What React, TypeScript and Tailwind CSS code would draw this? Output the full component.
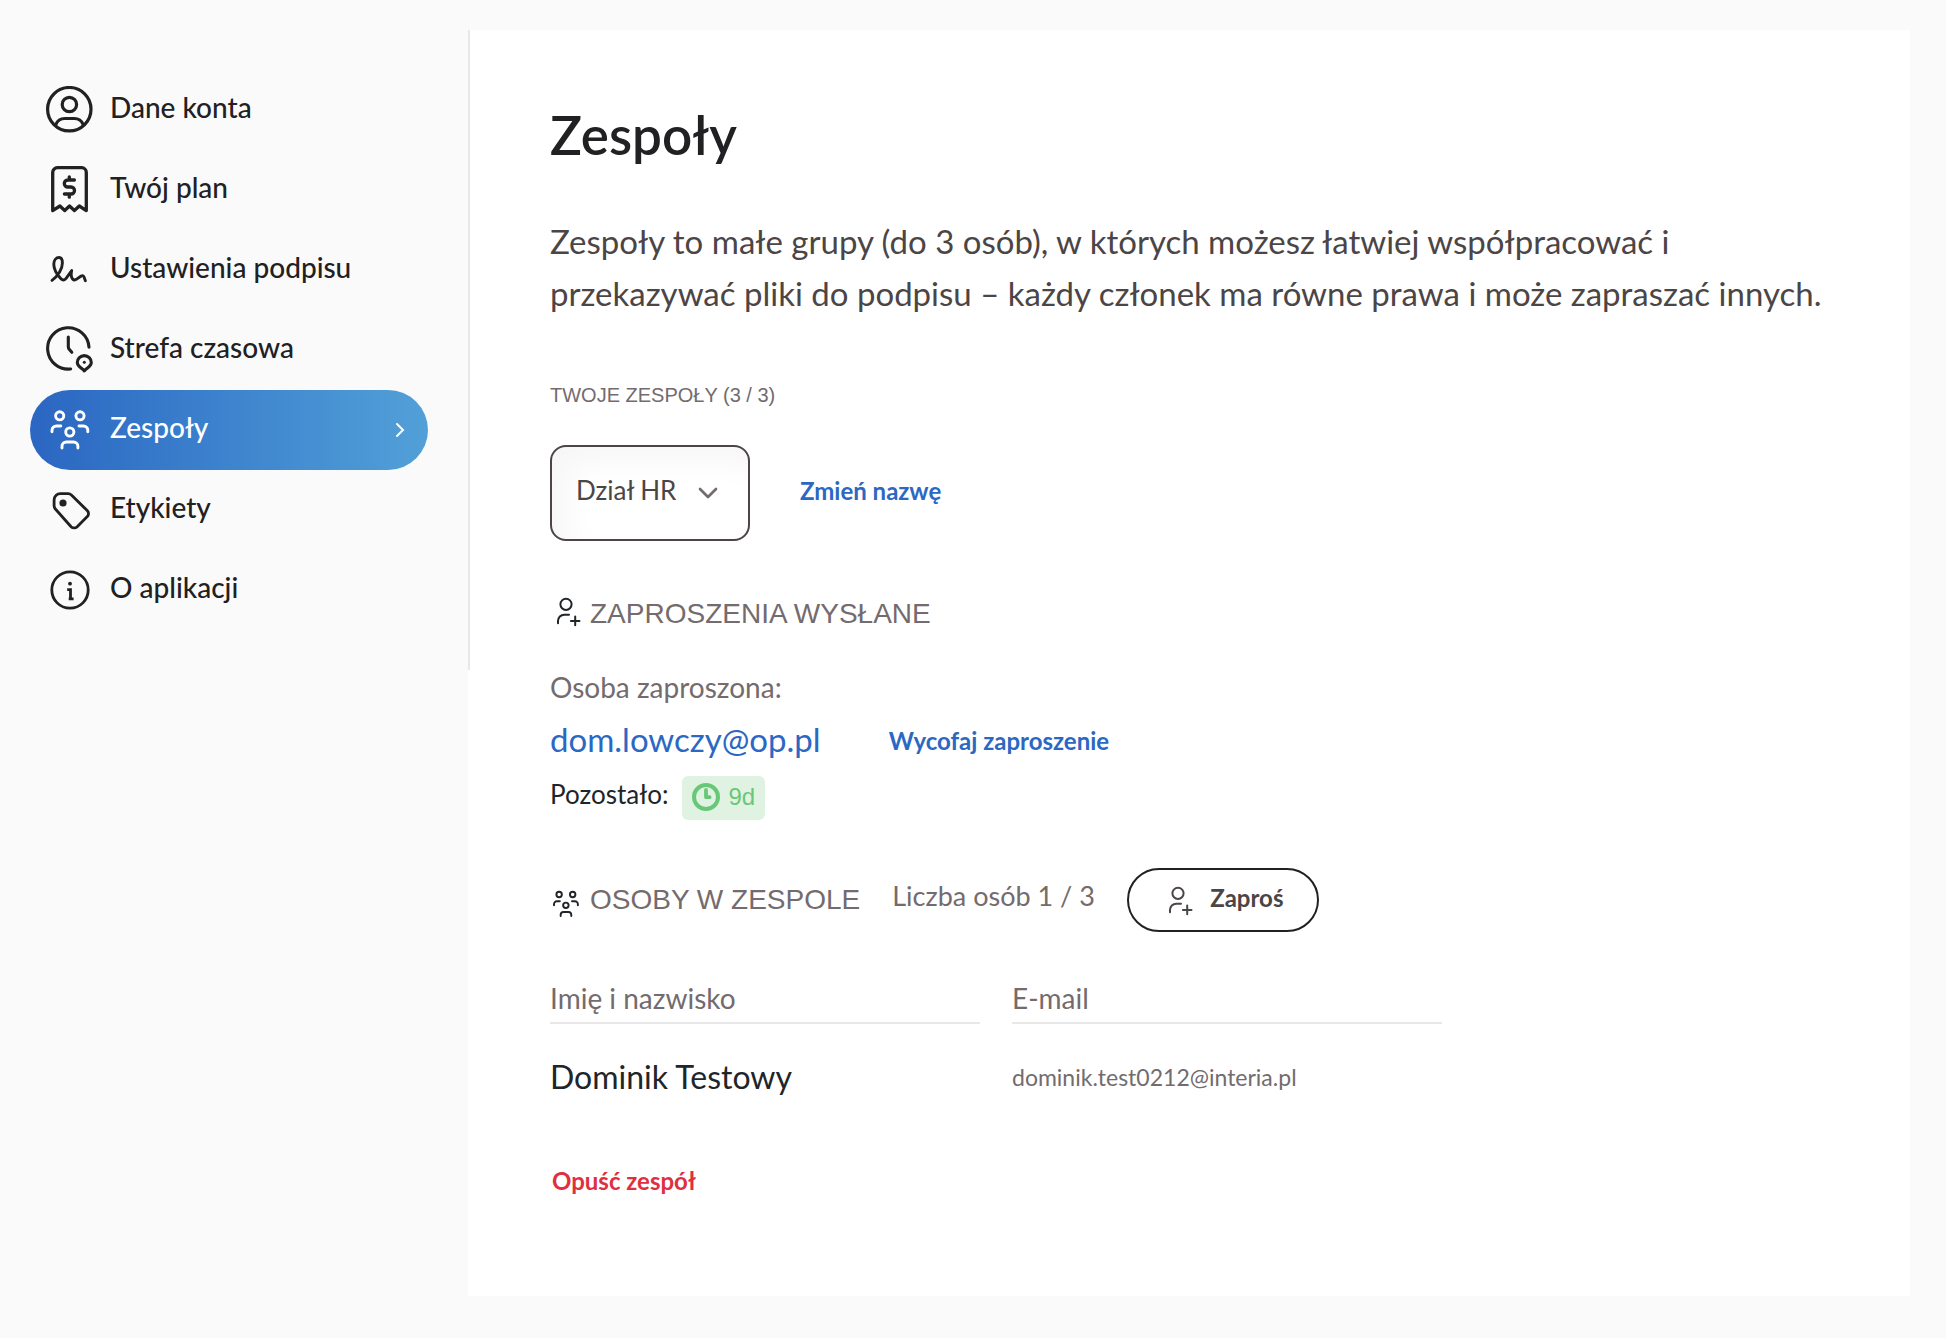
import React from 'react';
import { ChevronDown } from 'lucide-react';

type IconProps = { className?: string };

const AccountIcon = ({ className = 'size-12' }: IconProps) => (
    <svg viewBox="0 0 48 48" className={className} fill="none" stroke="currentColor" strokeWidth="3.2" strokeLinecap="round" aria-hidden="true">
        <circle cx="23.3" cy="23.2" r="21.7" />
        <circle cx="23.4" cy="18.5" r="7.2" />
        <path d="M9.8 38.6c1.5-3.7 5-6.1 9-6.1h9.4c4 0 7.5 2.4 9 6.1" />
    </svg>
);

const PlanIcon = ({ className = 'size-12' }: IconProps) => (
    <svg viewBox="0 0 48 48" className={className} fill="none" stroke="currentColor" strokeWidth="3.3" strokeLinecap="round" strokeLinejoin="round" aria-hidden="true">
        <path d="M6.7 44.6V6.4a4.7 4.7 0 0 1 4.7-4.7h24.2a4.7 4.7 0 0 1 4.7 4.7v38.2l-7-4.6-4.9 4.5-4.9-4.5-4.8 4.5-4.8-4.5z" />
        <path d="M28.4 14h-6.6a3.5 3.5 0 0 0 0 7h3.2a3.5 3.5 0 0 1 0 7h-6.6M23.3 10.8V14M23.3 28v3.2" />
    </svg>
);

const SignatureIcon = ({ className = 'size-12' }: IconProps) => (
    <svg viewBox="0 0 48 48" className={className} fill="none" stroke="currentColor" strokeWidth="2.9" strokeLinecap="round" strokeLinejoin="round" aria-hidden="true">
        <path d="M6 34.4c6-4.4 10.4-11.4 10.4-17.4 0-3.4-1.2-5.5-3.3-5.5-3 0-5.3 2.9-5.3 6.8 0 5.2 3.6 10.7 6.9 14.2 2 2.1 3.8 2 5.6-.3l5.4-7.7c-.8 3.3-.6 6.7.9 8.5 1.1 1.3 2.8 1.1 4.4-.1l4.2-2.9c1.4-.7 2.3-.3 2.8 1l1.4 3.7" />
    </svg>
);

const TimezoneIcon = ({ className = 'size-12' }: IconProps) => (
    <svg viewBox="0 0 48 48" className={className} fill="none" stroke="currentColor" strokeWidth="3.1" strokeLinecap="round" strokeLinejoin="round" aria-hidden="true">
        <path d="M43 21.2A20.7 20.7 0 1 0 24.6 43" />
        <path d="M22.3 11v9.8c0 1 .4 2 1.1 2.8l2.4 2.7" />
        <path d="M38.3 29.6a7 7 0 0 0-7 7c0 3.8 4.5 5.4 7 8.3 2.5-2.9 7-4.5 7-8.3a7 7 0 0 0-7-7z" />
        <circle cx="38.3" cy="36.3" r="1.5" fill="currentColor" stroke="none" />
    </svg>
);

const TeamIcon = ({ className = 'size-12' }: IconProps) => (
    <svg viewBox="0 0 48 48" className={className} fill="none" stroke="currentColor" strokeWidth="2.9" strokeLinecap="round" aria-hidden="true">
        <circle cx="13.7" cy="9.8" r="4.1" />
        <circle cx="34" cy="9.8" r="4.1" />
        <circle cx="23.8" cy="26" r="4.1" />
        <path d="M6 25.8v-1.5a4.3 4.3 0 0 1 4.3-4.3h4.5M33 20h4.5a4.3 4.3 0 0 1 4.3 4.3v1.5" />
        <path d="M16 42v-1.7a4.3 4.3 0 0 1 4.3-4.3h7.3a4.3 4.3 0 0 1 4.3 4.3V42" />
    </svg>
);

const TagIcon = ({ className = 'size-12' }: IconProps) => (
    <svg viewBox="0 0 48 48" className={className} fill="none" stroke="currentColor" strokeWidth="2.8" strokeLinejoin="round" aria-hidden="true">
        <path d="M8.1 19.8v-5.8a6.3 6.3 0 0 1 6.3-6.3h7.8c1.2 0 2.3.5 3.2 1.3L41.2 24.6a4.2 4.2 0 0 1 .1 6L31.2 40.7a4.3 4.3 0 0 1-6.1 0L9.6 23.3a5 5 0 0 1-1.5-3.5z" />
        <circle cx="17" cy="17" r="3.6" fill="currentColor" stroke="none" />
    </svg>
);

const InfoIcon = ({ className = 'size-12' }: IconProps) => (
    <svg viewBox="0 0 48 48" className={className} fill="none" stroke="currentColor" strokeWidth="2.8" aria-hidden="true">
        <circle cx="24" cy="24" r="18.2" />
        <circle cx="24" cy="17.7" r="1.9" fill="currentColor" stroke="none" />
        <path d="M21.2 23.6h3.3v9.2M22.7 32.8h4.9" />
    </svg>
);

const UserPlusIcon = ({ className = 'size-8' }: IconProps) => (
    <svg viewBox="0 0 32 32" className={className} fill="none" stroke="currentColor" strokeWidth="2" strokeLinecap="round" aria-hidden="true">
        <circle cx="16" cy="8.3" r="5.6" />
        <path d="M8 27.2V25a6.3 6.3 0 0 1 6.3-6.3h4.7M25.2 20.6v8.6M20.9 24.9h8.6" />
    </svg>
);

const ClockIcon = ({ className = 'size-7' }: IconProps) => (
    <svg viewBox="0 0 28 28" className={className} fill="none" stroke="currentColor" strokeWidth="4" aria-hidden="true">
        <circle cx="14" cy="14" r="12" />
        <path d="M14 7v7.2h3.6" strokeWidth="3.8" strokeLinecap="round" strokeLinejoin="round" />
    </svg>
);

const App = () => {
    const menu = [
        { id: 'account', title: 'Dane konta', icon: <AccountIcon /> },
        { id: 'plan', title: 'Twój plan', icon: <PlanIcon /> },
        { id: 'signature', title: 'Ustawienia podpisu', icon: <SignatureIcon /> },
        { id: 'timezone', title: 'Strefa czasowa', icon: <TimezoneIcon /> },
        { id: 'teams', title: 'Zespoły', icon: <TeamIcon />, active: true },
        { id: 'tags', title: 'Etykiety', icon: <TagIcon /> },
        { id: 'about', title: 'O aplikacji', icon: <InfoIcon /> }
    ];

    const members = [{ name: 'Dominik Testowy', email: 'dominik.test0212@interia.pl' }];

    return (
        <div className="min-h-screen bg-[#fafafa] flex items-start pt-[30px] pb-10 pr-9 font-['Lato','Open_Sans',sans-serif] text-[#212022]">
            {/* Sidebar */}
            <aside className="relative w-[470px] shrink-0 -mr-0.5 border-r-2 border-[#e8e8e8] py-10 pl-[30px] pr-10">
                <nav>
                    <ul>
                        {menu.map((item) => (
                            <li key={item.id}>
                                <a
                                    href={`#${item.id}`}
                                    aria-current={item.active ? 'page' : undefined}
                                    className={`flex h-20 items-center gap-4 rounded-full px-4 text-[28px] leading-9 font-medium ${item.active ? 'bg-linear-to-r from-[#2b66c2] to-[#52a0d8] text-white' : ''}`}
                                >
                                    {item.icon}
                                    <span className="flex-1 pb-1.5">{item.title}</span>
                                    {item.active && (
                                        <svg viewBox="0 0 20 20" className="size-5" fill="none" stroke="currentColor" strokeWidth="2" strokeLinecap="round" aria-hidden="true">
                                            <path d="M5 4l6 6-6 6" />
                                        </svg>
                                    )}
                                </a>
                            </li>
                        ))}
                    </ul>
                </nav>
            </aside>

            <main className="flex-1 min-w-0 bg-white pt-[73px] pb-[99px] pl-[82px] pr-20">
                <h1 className="text-[53px] leading-16 font-semibold">Zespoły</h1>
                <p className="mt-12 text-[33px] leading-[52px] text-[#4c4546]">
                    Zespoły to małe grupy (do 3 osób), w których możesz łatwiej współpracować i przekazywać pliki do podpisu – każdy członek ma równe prawa i może zapraszać innych.
                </p>

                {/* Team selection */}
                <label htmlFor="team" className="mt-[62px] block font-['Liberation_Sans',Arial,sans-serif] text-xl leading-7 text-[#736b6d]">
                    TWOJE ZESPOŁY (3 / 3)
                </label>
                <div className="mt-9 flex items-center gap-[50px]">
                    <div className="relative">
                        <select
                            id="team"
                            className="h-24 w-[200px] appearance-none rounded-2xl border-2 border-[#4c4546] bg-white pb-1.5 pl-6 pr-16 text-[26px] text-[#4c4546] shadow-[inset_16px_16px_30px_#f7f7f7]"
                        >
                            <option>Dział HR</option>
                        </select>
                        <ChevronDown className="pointer-events-none absolute right-[26px] top-8 size-8 text-[#736b6d]" />
                    </div>
                    <button type="button" className="pb-1 text-2xl font-bold text-[#2b68c4]">Zmień nazwę</button>
                </div>

                {/* Sent invitations */}
                <section className="mt-[53px]">
                    <h2 className="flex items-center gap-2 font-['Liberation_Sans',Arial,sans-serif] text-[28px] leading-10 text-[#736b6d]">
                        <UserPlusIcon className="size-8 -mt-1 text-[#212529]" />
                        ZAPROSZENIA WYSŁANE
                    </h2>
                    <p className="mt-[33px] text-[28px] leading-10 text-[#736b6d]">Osoba zaproszona:</p>
                    <div className="mt-2 flex items-center gap-[68px]">
                        <a href="mailto:dom.lowczy@op.pl" className="text-[33px] leading-12 text-[#2b68c4]">dom.lowczy@op.pl</a>
                        <button type="button" className="pt-1 text-2xl font-bold text-[#2b68c4]">Wycofaj zaproszenie</button>
                    </div>
                    <div className="mt-3 flex items-center gap-[14px] text-[26px] text-[#212529]">
                        <span className="pb-1.5">Pozostało:</span>
                        <span className="flex h-11 items-center gap-2 rounded-md bg-[#e0f3e2] px-2.5 font-['Liberation_Sans',Arial,sans-serif] text-2xl text-[#68c878]">
                            <ClockIcon className="size-7 mb-0.5" />
                            <span className="pb-0.5">9d</span>
                        </span>
                    </div>
                </section>

                {/* Team members */}
                <section className="mt-12">
                    <div className="flex items-center gap-8">
                        <h2 className="flex items-center gap-2 font-['Liberation_Sans',Arial,sans-serif] text-[28px] leading-10 text-[#736b6d]">
                            <TeamIcon className="size-8 mt-2 text-[#212529]" />
                            OSOBY W ZESPOLE
                        </h2>
                        <span className="pb-2 text-[27px] leading-9 text-[#736b6d]">Liczba osób 1 / 3</span>
                        <button type="button" className="flex h-16 w-48 items-center justify-center gap-4 rounded-full border-2 border-[#212022] text-2xl font-bold text-[#4c4546]">
                            <UserPlusIcon className="size-8 mt-0.5" />
                            <span className="pb-1">Zaproś</span>
                        </button>
                    </div>

                    <table className="mt-[46px] w-full max-w-[892px] table-fixed text-left">
                        <thead>
                            <tr className="text-[28px] leading-10 text-[#736b6d]">
                                <th scope="col" className="p-0 pr-4 font-normal">
                                    <div className="border-b-2 border-[#e8e8e8] pb-1">Imię i nazwisko</div>
                                </th>
                                <th scope="col" className="p-0 pl-4 font-normal">
                                    <div className="border-b-2 border-[#e8e8e8] pb-1">E-mail</div>
                                </th>
                            </tr>
                        </thead>
                        <tbody>
                            {members.map((member) => (
                                <tr key={member.email}>
                                    <td className="p-0 pt-[29px] pr-4 text-[32px] leading-12 text-[#212529]">{member.name}</td>
                                    <td className="p-0 pt-[29px] pl-4 text-[23px] text-[#736b6d]">{member.email}</td>
                                </tr>
                            ))}
                        </tbody>
                    </table>

                    <button type="button" className="mt-16 block px-0.5 text-2xl font-bold text-[#e0303f]">Opuść zespół</button>
                </section>
            </main>
        </div>
    );
};

export default App;
